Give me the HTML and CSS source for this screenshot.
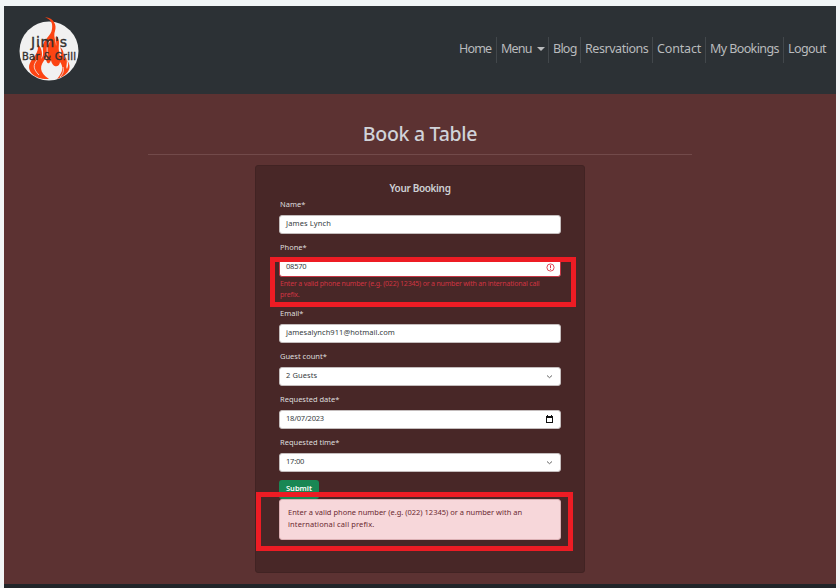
FILE: index.html
```html
<!DOCTYPE html>
<html lang="en">
<head>
<meta charset="utf-8">
<title>Jim's Bar &amp; Grill</title>
<link rel="stylesheet" href="styles.css">
</head>
<body>
<div class="page">
  <header class="header">
    <svg class="logo" width="62" height="66" viewBox="0 0 62 66" role="img" aria-label="Jim's Bar &amp; Grill">
      <circle cx="30" cy="34" r="29.5" fill="#f1f1f1"/>
      <path fill="#fc4413" d="M26 0C35 1 38 8 36 14C34 20 37 23 37 29C38 27 36 22 37 19C42 22 39 29 40 34C41 37 40 40 42 38C43 35 42 33 41 30C46 34 44 38 45 42C47 42 46 40 46 39C50 45 46 49 48 52C49 49 50 47 48 43C54 51 49 58 38 62C45 54 44 49 41 45C40 52 33 50 32 43C30 49 27 46 27 41C20 49 20 55 30 62C16 63 7 54 11 46C14 40 20 37 19 27C23 31 24 38 22 42C26 38 23 32 24 28C26 21 32 19 33 12C34 6 32 3 26 0Z"/>
      <path fill="none" stroke="#f1f1f1" stroke-width=".8" d="M31 24C25 30 31 36 26 44M18 43C14 48 14 52 20 58M44 50C45 54 44 57 41 60"/>
      <text class="brand" x="12" y="29.500" font-size="14" textLength="36">Jim's</text>
      <text class="brand" x="3" y="42.500" font-size="10" textLength="54">Bar &amp; Grill</text>
    </svg>
    <nav class="nav">
      <a class="n-home">Home</a>
      <a class="n-menu">Menu<i class="caret"></i></a>
      <a class="n-blog">Blog</a>
      <a class="n-res">Resrvations</a>
      <a class="n-contact">Contact</a>
      <a class="n-book">My Bookings</a>
      <a class="n-out">Logout</a>
    </nav>
  </header>
  <main class="main">
    <h1>Book a Table</h1>
    <section class="card">
      <h2>Your Booking</h2>
      <div class="field"><label>Name*</label><div class="input"><span class="t-name">James Lynch</span></div></div>
      <div class="field"><label>Phone*</label>
        <div class="input invalid"><span class="t-phone">08570</span>
          <svg width="9" height="9" viewBox="0 0 9 9" fill="none" stroke="#dc3545"><circle cx="4.5" cy="4.5" r="3.6" stroke-width=".9"/><path d="M4.5 2.2V5M4.5 5.8V6.8"/></svg></div>
        <p class="error"><span>Enter a valid phone number (e.g. (022) 12345) or a number with an international call</span><br>prefix.</p>
        <div class="mark mark-phone"></div>
      </div>
      <div class="field"><label>Email*</label><div class="input"><span class="t-email">jamesalynch911@hotmail.com</span></div></div>
      <div class="field"><label>Guest count*</label><div class="input"><span class="t-guest">2 Guests</span>
        <svg class="chev" width="7" height="7" viewBox="0 0 7 7" fill="none" stroke="#666"><path d="M1 2.5L3.5 4.7L6 2.5"/></svg></div></div>
      <div class="field"><label>Requested date*</label><div class="input"><span class="t-date">18/07/2023</span>
        <svg class="cal" width="7" height="8" viewBox="0 0 7 8"><path fill="#111" fill-rule="evenodd" d="M0 1H1V0H2V1H5V0H6V1H7V8H0ZM1 3V7H6V3Z"/></svg></div></div>
      <div class="field"><label>Requested time*</label><div class="input"><span class="t-time">17:00</span>
        <svg class="chev" width="7" height="7" viewBox="0 0 7 7" fill="none" stroke="#666"><path d="M1 2.5L3.5 4.7L6 2.5"/></svg></div></div>
      <button class="submit">Submit</button>
      <div class="alert">Enter a valid phone number (e.g. (022) 12345) or a number with an<br><span class="a2">international call prefix.</span>
        <div class="mark mark-alert"></div>
      </div>
    </section>
  </main>
  <footer class="footer"></footer>
</div>
</body>
</html>
```
FILE: styles.css
```css
* { box-sizing: border-box; }
body { margin: 0; background: #f1f5f6; font-family: "Noto Sans", sans-serif; overflow: hidden; }
.page { width: 832px; height: 582px; margin: 6px 4px 0; background: #5c3232; display: flex; flex-direction: column; }
.header { height: 88px; flex: none; background: #2c3135; display: flex; justify-content: space-between; padding: 11px 6px 0 15px; }
.brand { font-family: "DejaVu Sans", sans-serif; fill: #34302f; stroke: #34302f; stroke-width: .35px; }
.nav { display: flex; height: 26px; margin-top: 20px; }
.nav a { border-right: 1px solid #42474b; padding-left: 4px; line-height: 23px; font-size: 12.5px; letter-spacing: -.45px; color: #b9bbbd; white-space: nowrap; }
.nav a:last-child { border: 0; }
.nav .n-home { width: 42px; letter-spacing: -.8px; }
.nav .n-menu { width: 52px; letter-spacing: -.8px; }
.nav .n-blog { width: 32px; letter-spacing: -.75px; }
.n-res { width: 72px; }
.nav .n-contact { width: 53px; letter-spacing: -.15px; }
.nav .n-book { width: 78px; letter-spacing: -.6px; }
.nav .n-out { width: 46px; letter-spacing: -.6px; }
.caret { display: inline-block; margin-left: 5px; vertical-align: 2px; border: 4px solid transparent; border-top-color: #b9bbbd; border-bottom: 0; }
.main { flex: 1; display: flex; flex-direction: column; align-items: center; }
h1 { width: 544px; height: 61px; margin: 0; padding-top: 25px; border-bottom: 1px solid #724a4a; text-align: center; font: 500 19.5px/30px "Noto Sans", sans-serif; letter-spacing: -.3px; color: #d0d3d9; }
.card { width: 330px; height: 408px; margin-top: 10px; padding: 16px 23px; background: #482727; border: 1px solid #412323; border-radius: 3px; }
h2 { margin: 0; height: 17px; text-align: center; font: 600 10px/13px "Noto Sans", sans-serif; letter-spacing: -.35px; color: #ced0d4; }
.field { position: relative; margin-bottom: 8px; }
.field label { display: block; height: 16px; padding-left: 1px; font-size: 7.5px; line-height: 11px; color: #dedede; }
.input { height: 19px; width: 282px; border: 1px solid #c4bdbd; border-radius: 3px; background: #fff; display: flex; justify-content: space-between; padding: 0 5px 0 6px; font-size: 7.5px; line-height: 15px; color: #353b40; }
.input svg { margin-top: 4px; }
.input .chev { margin: 5px 2px 0 0; }
.input .cal { margin: 4px 2px 0 0; }
.input.invalid { border-color: #c73644; }
.t-name { letter-spacing: .12px; }
.t-email { letter-spacing: .05px; }
.t-guest { letter-spacing: .08px; }
.t-date { letter-spacing: -.2px; }
.t-time { letter-spacing: -.2px; }
.t-phone { letter-spacing: -.2px; }
.error { margin: 1px 0 0; height: 22px; padding-left: 1px; font-size: 7px; line-height: 11px; letter-spacing: -.19px; color: #cf3442; white-space: nowrap; }
.submit { display: flex; align-items: flex-start; justify-content: center; width: 40px; height: 19px; border: 0; border-radius: 3px; padding: 0; background: #198754; color: #fff; font: 600 7.5px/16px "Noto Sans", sans-serif; }
.alert { position: relative; width: 282px; height: 41px; padding: 6px 8px; background: #f7d7da; border: 1px solid #dcb0b4; border-radius: 3px; font-size: 7.5px; line-height: 12px; color: #6a2931; white-space: nowrap; }
.a2 { letter-spacing: .12px; }
.mark { position: absolute; border: 5px solid #ed1c24; }
.mark-phone { left: -9px; top: 15px; width: 306px; height: 50px; }
.mark-alert { left: -24px; top: -8px; width: 317px; height: 59px; }
.footer { height: 4px; background: #212529; }
```
